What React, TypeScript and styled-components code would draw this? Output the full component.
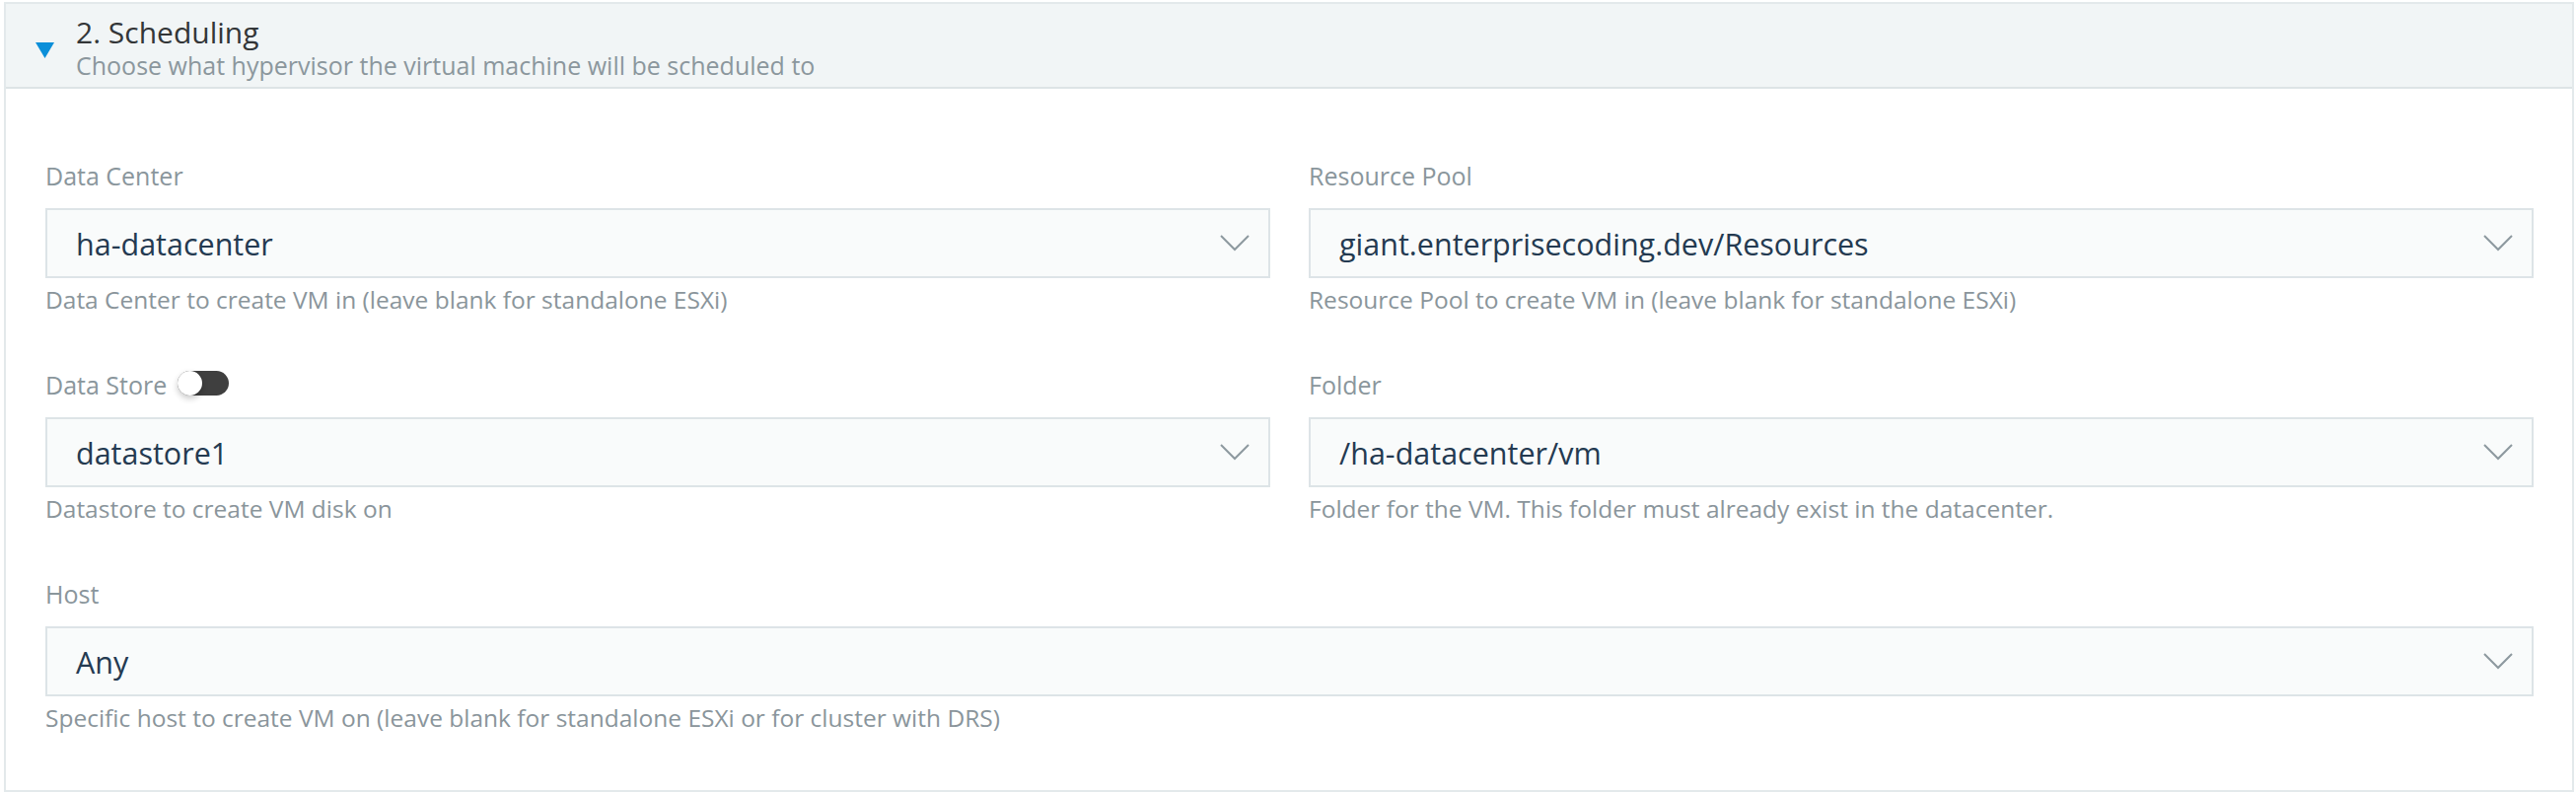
import React from 'react'
import styled, { createGlobalStyle } from 'styled-components'

const GlobalStyle = createGlobalStyle`
  html, body {
    margin: 0;
    padding: 0;
    background: #ffffff;
  }
  body {
    font-family: 'Open Sans', 'Noto Sans', sans-serif;
  }
  * {
    box-sizing: border-box;
  }
`

const Page = styled.div`
  height: 804px;
  padding: 2px 2px 1px 4px;
`

const Panel = styled.section`
  height: 100%;
  border: 2px solid #e3e9eb;
  background: #ffffff;
  display: flex;
  flex-direction: column;
`

const Header = styled.header`
  display: flex;
  align-items: center;
  gap: 22px;
  padding: 11px 30px 6px 30px;
  background: #f1f5f6;
  border-bottom: 2px solid #dde4e6;
`

const Caret = styled.svg`
  flex-shrink: 0;
  margin-top: 4px;
`

const HeaderText = styled.div`
  display: flex;
  flex-direction: column;
`

const Title = styled.h2`
  margin: 0;
  font-size: 30px;
  line-height: 36px;
  font-weight: 400;
  color: #333638;
`

const Subtitle = styled.p`
  margin: 0;
  font-size: 25px;
  line-height: 31px;
  color: #8b979d;
`

const Body = styled.div`
  padding: 73px 39px 0 40px;
  display: grid;
  grid-template-columns: 1fr 1fr;
  column-gap: 39px;
  row-gap: 56px;
`

const Field = styled.div<{ $wide?: boolean }>`
  display: flex;
  flex-direction: column;
  grid-column: ${(p) => (p.$wide ? '1 / -1' : 'auto')};
`

const LabelRow = styled.div`
  display: flex;
  align-items: center;
  gap: 11px;
  height: 30px;
  margin-bottom: 18px;
`

const Label = styled.label`
  font-size: 25px;
  line-height: 30px;
  color: #8a969c;
`

const Toggle = styled.span`
  position: relative;
  display: inline-block;
  width: 52px;
  height: 25px;
  border-radius: 13px;
  background: #3f3f3f;
  margin-top: -3px;
`

const Knob = styled.span`
  position: absolute;
  left: 0;
  top: 0;
  width: 25px;
  height: 25px;
  border-radius: 50%;
  background: #ffffff;
  box-shadow: 0 3px 6px rgba(0, 0, 0, 0.22);
`

const Select = styled.div`
  display: flex;
  align-items: center;
  justify-content: space-between;
  height: 71px;
  padding: 0 19px 0 29px;
  background: #f9fbfb;
  border: 2px solid #dde4e7;
`

const Value = styled.span`
  font-size: 30.5px;
  line-height: 36px;
  color: #243a51;
`

const Help = styled.p`
  margin: 7px 0 0 0;
  font-size: 24.5px;
  line-height: 30px;
  color: #8a959b;
`

const Chevron = () => (
  <svg width="30" height="17" viewBox="0 0 30 17">
    <polyline
      points="1,1 15,15 29,1"
      fill="none"
      stroke="#8d999f"
      strokeWidth="2"
    />
  </svg>
)

type FieldProps = {
  label: string
  value: string
  help: string
  wide?: boolean
  toggle?: boolean
}

const SelectField = ({ label, value, help, wide, toggle }: FieldProps) => (
  <Field $wide={wide}>
    <LabelRow>
      <Label>{label}</Label>
      {toggle && (
        <Toggle>
          <Knob />
        </Toggle>
      )}
    </LabelRow>
    <Select>
      <Value>{value}</Value>
      <Chevron />
    </Select>
    <Help>{help}</Help>
  </Field>
)

const App = () => {
  return (
    <Page>
      <GlobalStyle />
      <Panel>
        <Header>
          <Caret width="19" height="16" viewBox="0 0 19 16">
            <polygon points="0,0 19,0 9.5,16" fill="#0b8fd9" />
          </Caret>
          <HeaderText>
            <Title>2. Scheduling</Title>
            <Subtitle>Choose what hypervisor the virtual machine will be scheduled to</Subtitle>
          </HeaderText>
        </Header>

        <Body>
          <SelectField
            label="Data Center"
            value="ha-datacenter"
            help="Data Center to create VM in (leave blank for standalone ESXi)"
          />
          <SelectField
            label="Resource Pool"
            value="giant.enterprisecoding.dev/Resources"
            help="Resource Pool to create VM in (leave blank for standalone ESXi)"
          />
          <SelectField
            label="Data Store"
            value="datastore1"
            help="Datastore to create VM disk on"
            toggle
          />
          <SelectField
            label="Folder"
            value="/ha-datacenter/vm"
            help="Folder for the VM. This folder must already exist in the datacenter."
          />
          <SelectField
            label="Host"
            value="Any"
            help="Specific host to create VM on (leave blank for standalone ESXi or for cluster with DRS)"
            wide
          />
        </Body>
      </Panel>
    </Page>
  )
}

export default App
